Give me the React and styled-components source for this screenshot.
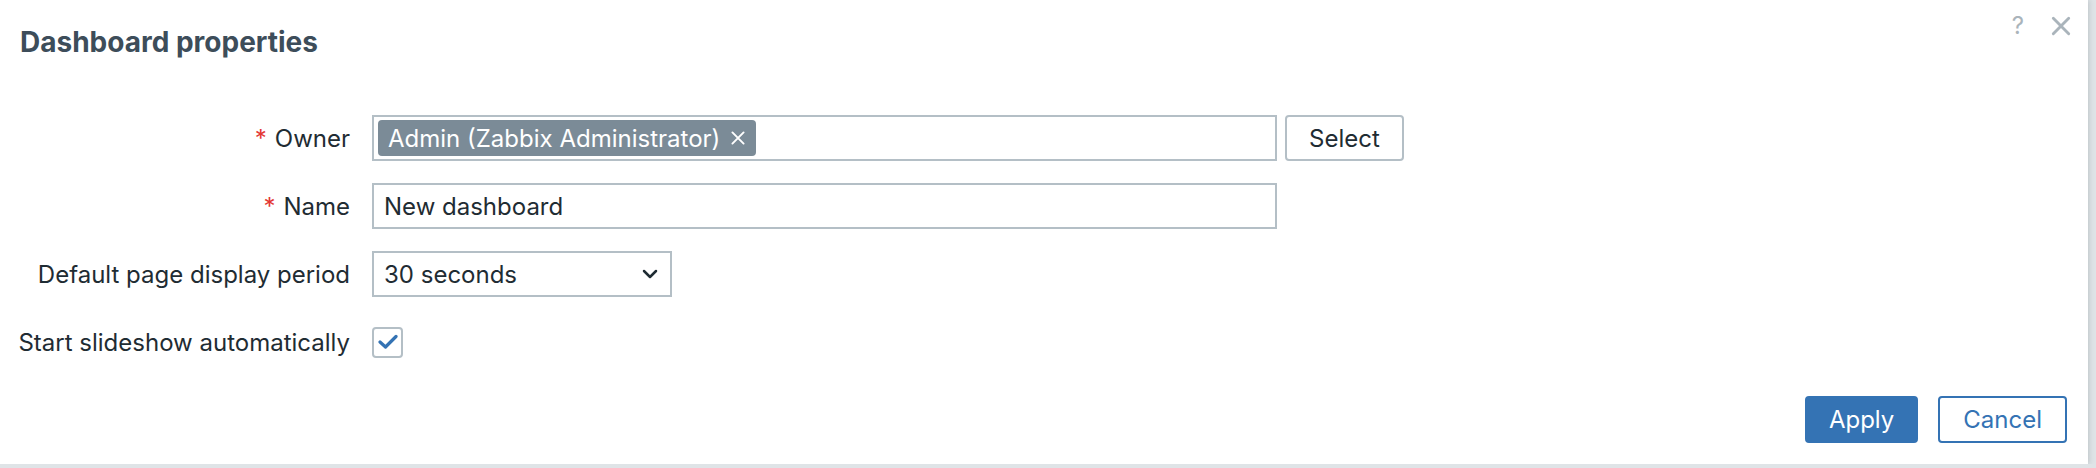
import styled, { createGlobalStyle } from "styled-components";

const GlobalStyle = createGlobalStyle`
  html, body {
    margin: 0;
    padding: 0;
    background: #dfe4e7;
    font-family: Inter, "Noto Sans", "Liberation Sans", sans-serif;
  }
`;

const Dialog = styled.div`
  width: 2088px;
  height: 464px;
  background: #ffffff;
  box-shadow: 0 0 6px rgba(40, 55, 65, 0.25);
  display: flex;
  flex-direction: column;
  box-sizing: border-box;
`;

const Header = styled.div`
  height: 84px;
  display: flex;
  justify-content: space-between;
  align-items: flex-start;
  padding: 0 16px 0 20px;
`;

const Title = styled.h4`
  margin: 0;
  line-height: 84px;
  font-size: 28px;
  font-weight: 700;
  color: #3d4d5a;
`;

const HeaderTools = styled.div`
  display: flex;
  align-items: center;
  gap: 26px;
  padding-top: 14px;
`;

const HelpIcon = styled.span`
  font-size: 24px;
  line-height: 24px;
  color: #aab4bb;
`;

const Form = styled.div`
  display: grid;
  grid-template-columns: 330px auto;
  grid-auto-rows: 46px;
  column-gap: 22px;
  row-gap: 22px;
  padding: 31px 20px 0 20px;
  color: #1f2c33;
  font-size: 24px;
`;

const Label = styled.label`
  display: flex;
  justify-content: flex-end;
  align-items: center;
  white-space: nowrap;
`;

const Required = styled.span`
  color: #e33734;
  margin-right: 8px;
`;

const Field = styled.div`
  display: flex;
  align-items: center;
  gap: 8px;
`;

const MultiSelect = styled.div`
  width: 905px;
  height: 46px;
  box-sizing: border-box;
  border: 2px solid #b4bfc6;
  display: flex;
  align-items: center;
  padding: 0 4px;
`;

const Tag = styled.span`
  display: inline-flex;
  align-items: center;
  gap: 10px;
  height: 36px;
  padding: 0 10px;
  border-radius: 4px;
  background: #7b8b97;
  color: #ffffff;
  white-space: nowrap;
`;

const TextInput = styled.div`
  width: ${(p) => p.width}px;
  height: 46px;
  box-sizing: border-box;
  border: 2px solid #b4bfc6;
  display: flex;
  align-items: center;
  justify-content: space-between;
  padding: 0 12px 0 10px;
`;

const Button = styled.button`
  height: ${(p) => (p.tall ? 47 : 46)}px;
  padding: 0 ${(p) => p.pad || 24}px;
  box-sizing: border-box;
  border-radius: 4px;
  font-family: inherit;
  font-size: 24px;
  cursor: pointer;
  background: ${(p) => (p.primary ? "#3473b4" : "#ffffff")};
  color: ${(p) => (p.primary ? "#ffffff" : p.blue ? "#3473b4" : "#1f2c33")};
  border: 2px solid
    ${(p) => (p.primary || p.blue ? "#3473b4" : "#b4bfc6")};
`;

const CheckBox = styled.span`
  width: 31px;
  height: 31px;
  box-sizing: border-box;
  border: 2px solid #b4bfc6;
  border-radius: 4px;
  display: flex;
  align-items: center;
  justify-content: center;
`;

const Footer = styled.div`
  margin-top: auto;
  display: flex;
  justify-content: flex-end;
  gap: 20px;
  padding: 0 21px 21px 0;
`;

const Cross = ({ size, color, width = 2.5 }) => (
  <svg width={size} height={size} viewBox="0 0 20 20">
    <path
      d="M3 3 L17 17 M17 3 L3 17"
      stroke={color}
      strokeWidth={width}
      strokeLinecap="round"
      fill="none"
    />
  </svg>
);

export default function App() {
  return (
    <>
      <GlobalStyle />
      <Dialog>
        <Header>
          <Title>Dashboard properties</Title>
          <HeaderTools>
            <HelpIcon>?</HelpIcon>
            <Cross size={22} color="#aab4bb" width={2.6} />
          </HeaderTools>
        </Header>
        <Form>
          <Label>
            <Required>*</Required>Owner
          </Label>
          <Field>
            <MultiSelect>
              <Tag>
                Admin (Zabbix Administrator)
                <Cross size={16} color="#ffffff" width={2.4} />
              </Tag>
            </MultiSelect>
            <Button pad={22}>Select</Button>
          </Field>

          <Label>
            <Required>*</Required>Name
          </Label>
          <Field>
            <TextInput width={905}>New dashboard</TextInput>
          </Field>

          <Label>Default page display period</Label>
          <Field>
            <TextInput width={300}>
              30 seconds
              <svg width="16" height="10" viewBox="0 0 16 10">
                <path
                  d="M2 2 L8 8 L14 2"
                  stroke="#1f2c33"
                  strokeWidth="2.5"
                  fill="none"
                  strokeLinecap="round"
                  strokeLinejoin="round"
                />
              </svg>
            </TextInput>
          </Field>

          <Label>Start slideshow automatically</Label>
          <Field>
            <CheckBox>
              <svg width="20" height="16" viewBox="0 0 20 16">
                <path
                  d="M2 8 L7.5 13 L18 2.5"
                  stroke="#3473b4"
                  strokeWidth="3.2"
                  fill="none"
                  strokeLinecap="round"
                  strokeLinejoin="round"
                />
              </svg>
            </CheckBox>
          </Field>
        </Form>
        <Footer>
          <Button primary tall pad={22}>
            Apply
          </Button>
          <Button blue tall pad={23}>
            Cancel
          </Button>
        </Footer>
      </Dialog>
    </>
  );
}
